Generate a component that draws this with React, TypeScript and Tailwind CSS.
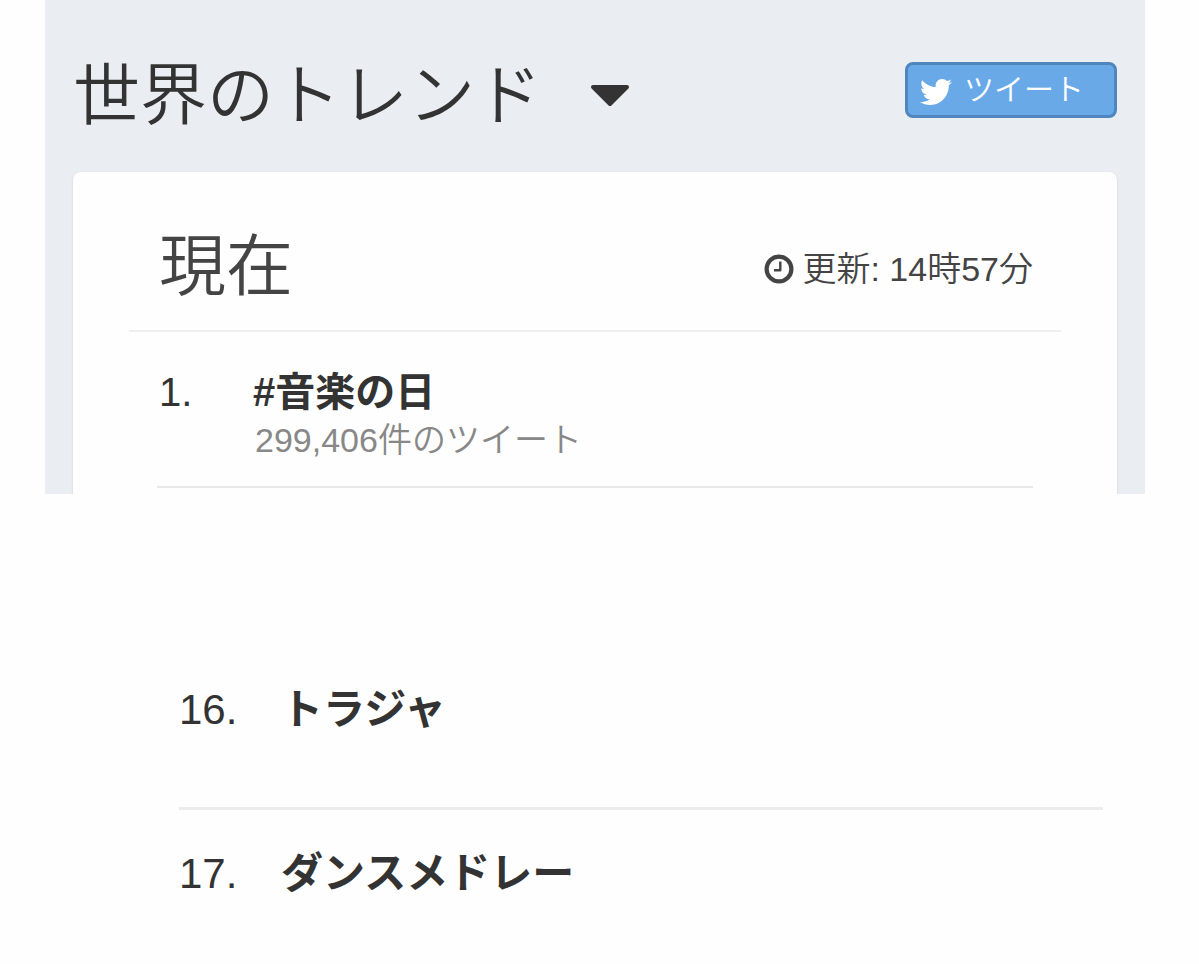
import { FaTwitter } from "react-icons/fa";

const trends = [{ rank: 1, name: "#音楽の日", count: "299,406件のツイート" }];

const moreTrends = [
    { rank: 16, name: "トラジャ" },
    { rank: 17, name: "ダンスメドレー" },
];

function CaretIcon() {
    return (
        <svg viewBox="0 0 40 24" className="w-10 h-6" aria-hidden="true">
            <path
                d="M3 3H37L20 20Z"
                fill="currentColor"
                stroke="currentColor"
                strokeWidth="4"
                strokeLinejoin="round"
            />
        </svg>
    );
}

function ClockIcon() {
    return (
        <svg viewBox="0 0 30 30" className="w-[30px] h-[30px]" fill="none" stroke="currentColor" aria-hidden="true">
            <circle cx="15" cy="15" r="12.4" strokeWidth="4.2" />
            <path d="M16.3 7.5V16.3H10" strokeWidth="2.4" strokeLinejoin="round" />
        </svg>
    );
}

export default function App() {
    return (
        <main className="min-h-screen bg-[#fefefe] text-[#333333] font-['Liberation_Sans','Noto_Sans_CJK_JP',sans-serif]">
            <section className="ml-[45px] mr-[54px] bg-[#eaeef3] px-7 pt-12 overflow-hidden">
                <header className="flex items-center justify-between h-[92px]">
                    <h1 className="text-[67px] leading-[92px] font-[350]">
                        <button type="button" className="flex items-center gap-12 pt-1" aria-haspopup="menu">
                            世界のトレンド
                            <CaretIcon />
                        </button>
                    </h1>
                    <button
                        type="button"
                        className="flex items-center gap-3 w-[212px] h-14 px-3 mb-2 rounded-lg border-[3px] border-[#4f86bd] bg-[#6aa9e7] text-white text-[30px] leading-9 font-[350]"
                    >
                        <FaTwitter className="w-8 h-8 mt-1" />
                        ツイート
                    </button>
                </header>

                <div className="mt-8 px-14 pt-8 pb-1.5 bg-[#fefefe] rounded-t-lg shadow-sm">
                    <div className="flex items-center justify-between h-32 px-7 pt-1 pb-1 border-b-2 border-[#eeeeee] text-[#444444]">
                        <h2 className="text-[67px] leading-[92px] font-[350] pl-0.5">現在</h2>
                        <p className="flex items-center gap-2 pt-1 text-[34px] leading-10 font-[350]">
                            <ClockIcon />
                            更新: 14時57分
                        </p>
                    </div>
                    <ol className="px-7">
                        {trends.map((trend) => (
                            <li key={trend.rank} className="flex h-[156px] pt-9 border-b-2 border-[#e8e8e8]">
                                <span className="w-24 pl-0.5 text-[40px] leading-[48px]">{trend.rank}.</span>
                                <div>
                                    <a href="#" className="block text-[40px] leading-[48px] font-bold">
                                        {trend.name}
                                    </a>
                                    <p className="pl-0.5 pt-0.5 text-[34px] leading-[44px] font-[350] text-[#888888]">{trend.count}</p>
                                </div>
                            </li>
                        ))}
                    </ol>
                </div>
            </section>

            <ol className="ml-[179px] mr-24 mt-[152px]">
                {moreTrends.map((trend) => (
                    <li
                        key={trend.rank}
                        className="flex h-[164px] pt-9 border-b-[3px] border-[#ececec] last:h-auto last:border-b-0 text-[42px] leading-[56px]"
                    >
                        <span className="w-[102px]">{trend.rank}.</span>
                        <a href="#" className="font-bold">
                            {trend.name}
                        </a>
                    </li>
                ))}
            </ol>
        </main>
    );
}
